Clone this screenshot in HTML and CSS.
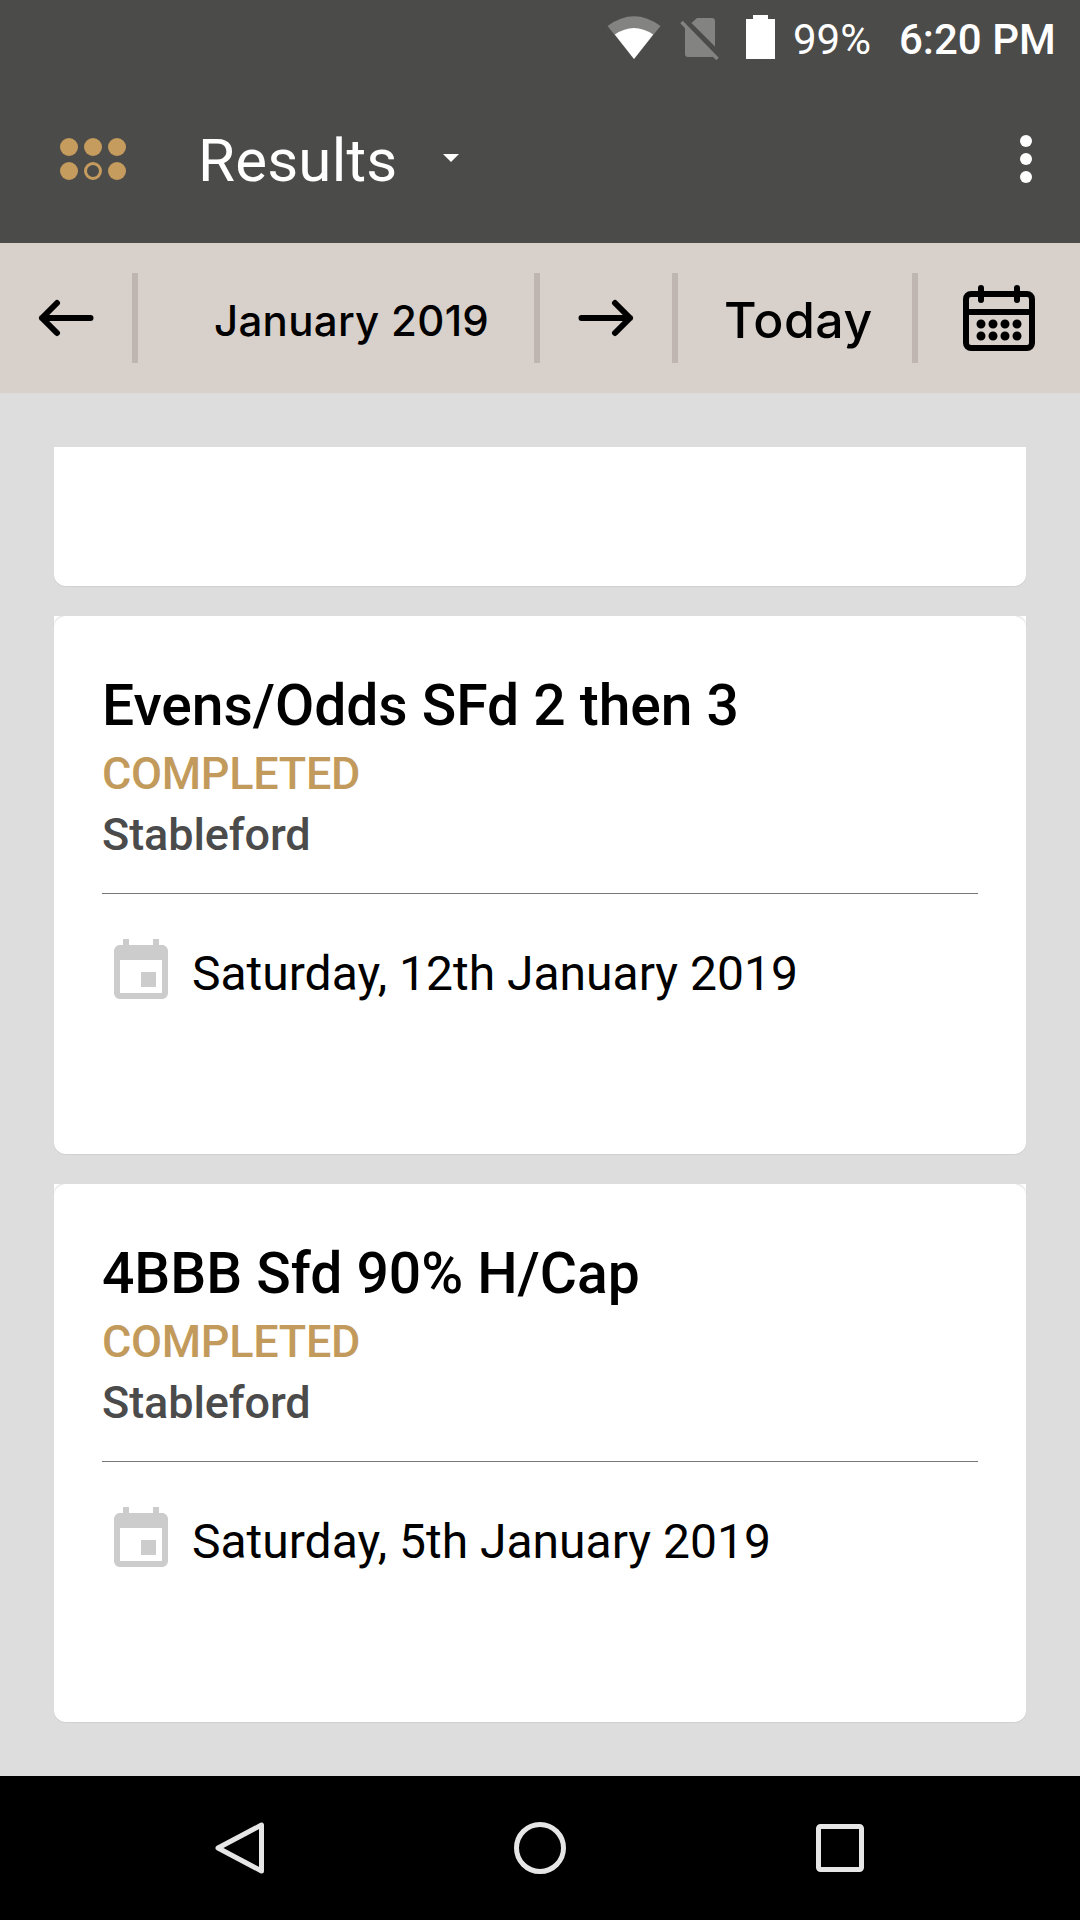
FILE: index.html
```html
<!DOCTYPE html>
<html>
  <head>
    <meta charset="utf-8">
    <title>Results</title>
    <link rel="stylesheet" href="styles.css">
  </head>
  <body>
    <div class="status-bar">
      <svg class="wifi" width="54" height="44" viewBox="0 0 54 44">
        <path d="M0.500 11Q27 -8.500 53.500 11L27 44z" fill="#838381"/>
        <path d="M7.800 19.500Q27 6.500 46.200 19.500L27 44z" fill="#fff"/>
      </svg>
      <svg class="no-sim" width="40" height="44" viewBox="0 0 40 44">
        <path d="M17 2h15a3 3 0 0 1 3 3v25.500L11.500 7zM5 10.500l29 29.500q-1 1-2 1H8a3 3 0 0 1-3-3z" fill="#838381"/>
        <path d="M1.500 6l36 37" stroke="#838381" stroke-width="3.500"/>
      </svg>
      <svg class="battery" width="29" height="44" viewBox="0 0 29 44">
        <path d="M7 0h15v4h7v40H0V4h7z" fill="#fff"/>
      </svg>
      <span class="percent">99%</span>
      <span class="time">6:20 PM</span>
    </div>
    <div class="app-bar">
      <svg class="logo" width="66" height="42" viewBox="0 0 66 42" fill="#c59c5e">
        <circle cx="9" cy="9" r="9"/>
        <circle cx="33" cy="9" r="9"/>
        <circle cx="57" cy="9" r="9"/>
        <circle cx="9" cy="33" r="9"/>
        <circle cx="33" cy="33" r="7.500" fill="none" stroke="#c59c5e" stroke-width="3"/>
        <circle cx="57" cy="33" r="9"/>
      </svg>
      <span class="title">Results</span>
      <svg class="caret" width="16" height="8" viewBox="0 0 16 8"><path d="M0 0h16L8 8z" fill="#fff"/></svg>
      <svg class="more" width="12" height="48" viewBox="0 0 12 48" fill="#fff">
        <circle cx="6" cy="6" r="6"/>
        <circle cx="6" cy="24" r="6"/>
        <circle cx="6" cy="42" r="6"/>
      </svg>
    </div>
    <div class="date-bar">
      <div class="prev">
        <svg width="56" height="38" viewBox="0 0 56 38"><path d="M52.500 19H4M19 4L4 19l15 15"/></svg>
      </div>
      <div class="month">January 2019</div>
      <div class="next">
        <svg width="56" height="38" viewBox="0 0 56 38"><path d="M3.500 19H52M37 4l15 15l-15 15"/></svg>
      </div>
      <div class="today">Today</div>
      <div class="calendar">
        <svg width="72" height="66" viewBox="0 0 72 66">
          <rect x="3" y="9" width="66" height="54" rx="5"/>
          <path d="M3 27h66M18 3v12M54 3v12"/>
          <path class="dots" d="M18 39h0M30 39h0M42 39h0M54 39h0M18 51h0M30 51h0M42 51h0M54 51h0"/>
        </svg>
      </div>
    </div>
    <div class="list">
      <div class="card cut"></div>
      <div class="card">
        <div class="name">Evens/Odds SFd 2 then 3</div>
        <div class="state">COMPLETED</div>
        <div class="type">Stableford</div>
        <div class="date">
          <svg width="72" height="72" viewBox="0 0 24 24"><path d="M17 12h-5v5h5v-5zM16 1v2H8V1H6v2H5c-1.110 0-1.990.9-1.990 2L3 19c0 1.100.89 2 2 2h14c1.100 0 2-.9 2-2V5c0-1.100-.9-2-2-2h-1V1h-2zm3 18H5V8h14v11z"/></svg>
          <span>Saturday, 12th January 2019</span>
        </div>
      </div>
      <div class="card">
        <div class="name">4BBB Sfd 90% H/Cap</div>
        <div class="state">COMPLETED</div>
        <div class="type">Stableford</div>
        <div class="date">
          <svg width="72" height="72" viewBox="0 0 24 24"><path d="M17 12h-5v5h5v-5zM16 1v2H8V1H6v2H5c-1.110 0-1.990.9-1.990 2L3 19c0 1.100.89 2 2 2h14c1.100 0 2-.9 2-2V5c0-1.100-.9-2-2-2h-1V1h-2zm3 18H5V8h14v11z"/></svg>
          <span>Saturday, 5th January 2019</span>
        </div>
      </div>
    </div>
    <div class="nav-bar">
      <svg width="52" height="52" viewBox="0 0 52 52"><path d="M47.500 3v46L4 26z"/></svg>
      <svg width="52" height="52" viewBox="0 0 52 52"><circle cx="26" cy="26" r="23.500"/></svg>
      <svg width="52" height="52" viewBox="0 0 52 52"><rect x="4.500" y="4.500" width="43" height="43" rx="2"/></svg>
    </div>
  </body>
</html>
```
FILE: styles.css
```css
* {
  box-sizing: border-box;
}
body {
  margin: 0;
  width: 1080px;
  height: 1920px;
  display: flex;
  flex-direction: column;
  overflow: hidden;
  background-color: #ddd;
  font-family: Roboto, sans-serif;
}
svg {
  display: block;
  flex: none;
}
.status-bar {
  height: 72px;
  display: flex;
  align-items: flex-start;
  justify-content: flex-end;
  padding: 15px 26px 0 0;
  background-color: #4b4b49;
  color: #fff;
  font-size: 42px;
  line-height: 49px;
  white-space: nowrap;
}
  .wifi {
    margin-right: 19px;
  }
  .no-sim {
    margin: 1px 26px 0 0;
  }
  .battery {
    margin-right: 18px;
  }
  .percent {
    width: 106px;
  }
  .time {
    width: 155px;
    font-weight: 500;
  }
.app-bar {
  height: 171px;
  display: flex;
  align-items: center;
  padding: 3px 48px 0 60px;
  background-color: #4b4b49;
  color: #fff;
}
  .title {
    width: 245px;
    margin-left: 72px;
    padding-top: 3px;
    font-size: 60px;
    letter-spacing: 0.2px;
  }
  .caret {
    margin-top: -2px;
  }
  .more {
    margin-left: auto;
  }
.date-bar {
  height: 150px;
  display: flex;
  align-items: center;
  background-color: #d8d0ca;
  color: #000;
  font-family: Inter, sans-serif;
  font-weight: 500;
}
.date-bar > div {
  height: 90px;
  display: flex;
  align-items: center;
  border-right: 6px solid #bfb6b1;
  white-space: nowrap;
}
.date-bar svg {
  fill: none;
  stroke: #000;
  stroke-width: 6;
  stroke-linecap: round;
  stroke-linejoin: round;
}
.date-bar .dots {
  stroke-width: 9;
}
.date-bar .prev {
  width: 138px;
  padding-left: 38px;
}
.date-bar .month {
  width: 402px;
  padding: 4px 0 0 76px;
  font-size: 42px;
  letter-spacing: 0.3px;
}
.date-bar .next {
  width: 138px;
  padding-left: 38px;
}
.date-bar .today {
  width: 240px;
  padding: 4px 0 0 46px;
  font-size: 50px;
  letter-spacing: 0.5px;
}
.date-bar .calendar {
  padding-left: 45px;
  border: none;
}
.list {
  height: 1383px;
  padding: 54px 54px 0;
}
  .card {
    position: relative;
    height: 538px;
    margin-bottom: 30px;
    padding: 55px 48px 0;
    border-radius: 0 0 12px 12px;
    background-color: #fff;
    box-shadow: 0 1px 1px rgba(0, 0, 0, 0.06);
    overflow: hidden;
  }
  /* faint rounded edge inside the square top corners */
  .card::before {
    content: '';
    position: absolute;
    top: 0;
    left: 0;
    right: 0;
    height: 24px;
    border-radius: 12px 12px 0 0;
    box-shadow: 0 -1px 2px rgba(0, 0, 0, 0.15);
    clip-path: inset(0 0 12px);
  }
  .card.cut {
    height: 139px;
  }
  .card.cut::before {
    display: none;
  }
  .name {
    font-size: 57px;
    font-weight: 500;
    line-height: 70px;
    letter-spacing: -0.04px;
    color: #000;
  }
  .state, .type {
    font-size: 45px;
    font-weight: 500;
    line-height: 62px;
  }
  .state {
    padding-top: 2px;
    letter-spacing: -0.3px;
    color: #c29b5c;
  }
  .type {
    margin-top: -1px;
    letter-spacing: -0.1px;
    color: #4b4b4b;
  }
  .date {
    display: flex;
    align-items: center;
    margin-top: 27px;
    padding: 42px 0 0 3px;
    border-top: 1px solid #777;
    font-size: 48px;
    color: #000;
  }
  .date svg {
    fill: #ccc;
  }
  .date span {
    margin-left: 15px;
    padding-top: 3px;
    white-space: nowrap;
  }
.nav-bar {
  height: 144px;
  display: flex;
  align-items: center;
  justify-content: center;
  gap: 248px;
  background-color: #000;
}
.nav-bar svg {
  fill: none;
  stroke: #e6e6e6;
  stroke-width: 5;
  stroke-linejoin: round;
}
```
